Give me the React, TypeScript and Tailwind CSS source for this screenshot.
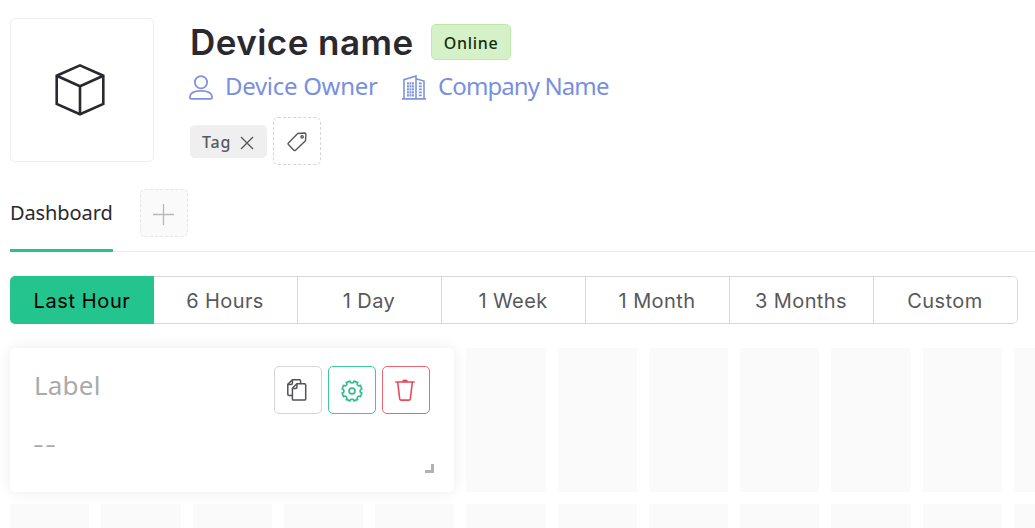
import React from "react";

const ranges = ["Last Hour", "6 Hours", "1 Day", "1 Week", "1 Month", "3 Months", "Custom"];

function CubeIcon() {
  return (
    <svg className="mr-[4px]" width="52" height="54" viewBox="0 0 52 54" fill="none" stroke="#29292f" strokeWidth="2.6" strokeLinejoin="miter">
      <path d="M26 2.4 49.3 12.7V41L26 51.3 2.7 41V12.7Z" />
      <path d="M2.7 12.7 26 23.3 49.3 12.7M26 23.3V51.3" />
    </svg>
  );
}

function UserIcon() {
  return (
    <svg width="24" height="25" viewBox="0 0 24 25" fill="none" stroke="#7f93de" strokeWidth="1.8">
      <circle cx="12" cy="7.2" r="6.1" />
      <path d="M.9 22.2C.9 17.6 5 15.8 12 15.8s11.1 1.8 11.1 6.4v.4q0 1.3-1.3 1.3H2.2Q.9 23.9.9 22.6Z" />
    </svg>
  );
}

function BuildingIcon() {
  return (
    <svg width="24" height="25" viewBox="0 0 24 25" fill="none" stroke="#7f93de" strokeWidth="1.6">
      <path d="M0 23.9h24M2 23.5V4.7L14 1v22.5M14 3.8l8 2.2v17.5" />
      <path d="M5 8.3h7M5 11.3h7M5 14.3h7M5 17.3h7M5 20.3h7" strokeWidth="2.2" strokeDasharray="1.9 .6" />
      <path d="M16.8 8.3h3M16.8 11.3h3M16.8 14.3h3M16.8 17.3h3M16.8 20.3h3" strokeWidth="1.8" />
    </svg>
  );
}

function TagIcon() {
  return (
    <svg className="mt-px" width="20" height="20" viewBox="0 0 20 20" fill="none" stroke="#58585c" strokeWidth="1.4" strokeLinejoin="round">
      <path d="M10.7 1.5 17.6 1q1.3 0 1.3 1.3l-.4 6.4L8.5 18.2q-.8.7-1.6 0L1.4 12.5q-.7-.8 0-1.6Z" />
      <circle cx="15.1" cy="4.8" r="1.2" />
    </svg>
  );
}

function CopyIcon() {
  return (
    <svg className="mr-[2px]" width="20" height="22" viewBox="0 0 20 22" fill="none" stroke="#525257" strokeWidth="1.5" strokeLinejoin="round">
      <path d="M5.3 16.4H2q-1.2 0-1.2-1.2V5.4L5.4.8h7q1.2 0 1.2 1.2v2.1" />
      <path d="M.8 5.5h3.4q1.2 0 1.2-1.2V.8" />
      <path d="M5.4 9.2 9.8 4.7h7.7q1.2 0 1.2 1.2v14q0 1.2-1.2 1.2H6.6q-1.2 0-1.2-1.2Z" />
      <path d="M5.4 9.4h3.3q1.2 0 1.2-1.2V4.7" />
    </svg>
  );
}

function GearIcon() {
  return (
    <svg className="mt-px mr-px" width="22" height="22" viewBox="0 0 22 22" fill="none" stroke="#31be8e" strokeWidth="1.7" strokeLinejoin="round">
      <path d="M9 1.1C9.3 3.6 12.7 3.6 13 1.1L16.7 2.6C15.2 4.6 17.4 6.8 19.4 5.3L20.9 9C18.4 9.3 18.4 12.7 20.9 13L19.4 16.7C17.4 15.2 15.2 17.4 16.7 19.4L13 20.9C12.7 18.4 9.3 18.4 9 20.9L5.3 19.4C6.8 17.4 4.6 15.2 2.6 16.7L1.1 13C3.6 12.7 3.6 9.3 1.1 9L2.6 5.3C4.6 6.8 6.8 4.6 5.3 2.6Z" />
      <circle cx="11" cy="11" r="2.9" />
    </svg>
  );
}

function TrashIcon() {
  return (
    <svg className="mr-[2px]" width="20" height="22" viewBox="0 0 20 22" fill="none" stroke="#e94a58" strokeWidth="1.6" strokeLinejoin="round">
      <path d="M.3 3h19.4M2.7 3.3l2 16.7q.1 1.1 1.2 1.1h8.2q1.1 0 1.2-1.1l2-16.7" />
      <path d="M7 2.7q.3-2 3-2t3 2Z" fill="#e94a58" strokeWidth=".6" />
    </svg>
  );
}

export default function App() {
  return (
    <div className="h-[528px] w-[1035px] overflow-hidden bg-white pl-2.5 font-['Noto_Sans',sans-serif] whitespace-nowrap">
      <header className="flex h-[189px] pt-[18px]">
        <div className="flex size-36 shrink-0 items-center justify-center rounded-[5px] border border-[#eeeeef]">
          <CubeIcon />
        </div>
        <div className="ml-9">
          <div className="flex h-12 items-center">
            <h1 className="w-[241px] font-['Inter',sans-serif] text-[35px] leading-[48px] font-semibold tracking-[0.45px] text-[#29292f]">Device name</h1>
            <span className="flex h-9 w-20 items-center justify-center rounded-[5px] border border-[#bde8a8] bg-[#d4f1c7] pt-px text-base font-medium tracking-[0.7px] text-[#152b0d]">Online</span>
          </div>
          <div className="-ml-px flex h-[41px] items-center text-[24px] text-[#7990e0]">
            <span className="flex w-9 pt-px"><UserIcon /></span>
            <span className="w-[177px] pb-0.5 tracking-[-0.3px]">Device Owner</span>
            <span className="flex w-9 pt-px"><BuildingIcon /></span>
            <span className="pb-0.5 tracking-[-0.9px]">Company Name</span>
          </div>
          <div className="mt-2.5 flex items-center gap-1.5">
            <div className="flex h-[33px] w-[77px] items-center justify-between rounded-[5px] bg-[#efefef] pr-[13px] pl-3 text-base font-medium text-[#58585c]">
              <span className="pt-px tracking-[0.8px]">Tag</span>
              <svg className="mt-[3px]" width="14" height="14" viewBox="0 0 14 14" fill="none" stroke="#58585c" strokeWidth="1.4"><path d="m1 1 12 12M13 1 1 13" /></svg>
            </div>
            <button className="flex size-12 items-center justify-center rounded-[5px] border border-dashed border-[#d5d5d5]"><TagIcon /></button>
          </div>
        </div>
      </header>

      <nav className="flex h-[63px] border-b border-[#ececed]">
        <div className="-mb-px h-[63px] w-[103px] border-b-[3px] border-[#24c48e] pt-[9px] text-[20px] leading-[30px] tracking-[-0.1px] text-[#29292f]">Dashboard</div>
        <button className="ml-[27px] flex size-12 items-center justify-center rounded-[5px] border border-dashed border-[#e5e5e5] bg-[#fafafa]">
          <svg className="mt-[2px] mr-px" width="21" height="21" viewBox="0 0 21 21" fill="none" stroke="#b9b9bb" strokeWidth="1.3"><path d="M0 10.5h21M10.5 0v21" /></svg>
        </button>
      </nav>

      <div className="mt-6 flex h-12 w-[1008px] overflow-hidden rounded-[5px] font-['Inter',sans-serif] text-[20px] tracking-[0.4px]">
        {ranges.map((range, i) => (
          <button
            key={range}
            className={
              i === 0
                ? "w-36 bg-[#24c48e] pt-0.5 tracking-[0.6px] text-black"
                : i === 6
                  ? "w-36 rounded-r-[5px] border-y border-r border-[#d8d8d9] pt-0.5 pr-px text-[#58585c]"
                  : "w-36 border-y border-r border-[#d8d8d9] pt-0.5 pr-px text-[#58585c]"
            }
          >
            {range}
          </button>
        ))}
      </div>

      <main className="mt-6 grid w-[1083.3px] grid-cols-12 grid-rows-[144px_144px] gap-3">
        <section className="relative col-span-5 rounded-[6px] bg-white px-6 pt-[18px] shadow-[0_0_16px_rgba(0,0,0,0.08)]">
          <div className="flex justify-between">
            <span className="text-[26px] leading-[38px] tracking-[0.2px] text-[#aaaaac]">Label</span>
            <div className="flex gap-1.5">
              <button className="flex size-12 items-center justify-center rounded-[5px] border border-[#d5d5d6]"><CopyIcon /></button>
              <button className="flex size-12 items-center justify-center rounded-[5px] border border-[#3bc998]"><GearIcon /></button>
              <button className="flex size-12 items-center justify-center rounded-[5px] border border-[#ec6570]"><TrashIcon /></button>
            </div>
          </div>
          <div className="-ml-px mt-[11px] text-[33px] leading-[36px] font-light tracking-[1.5px] text-[#aaaaac]">--</div>
          <span className="absolute right-5 bottom-[19px] size-[9px] border-r-[3px] border-b-[3px] border-[#b1b1b1]" />
        </section>
        {Array.from({ length: 19 }, (_, i) => <div key={i} className="bg-[#fafafa]" />)}
      </main>
    </div>
  );
}
